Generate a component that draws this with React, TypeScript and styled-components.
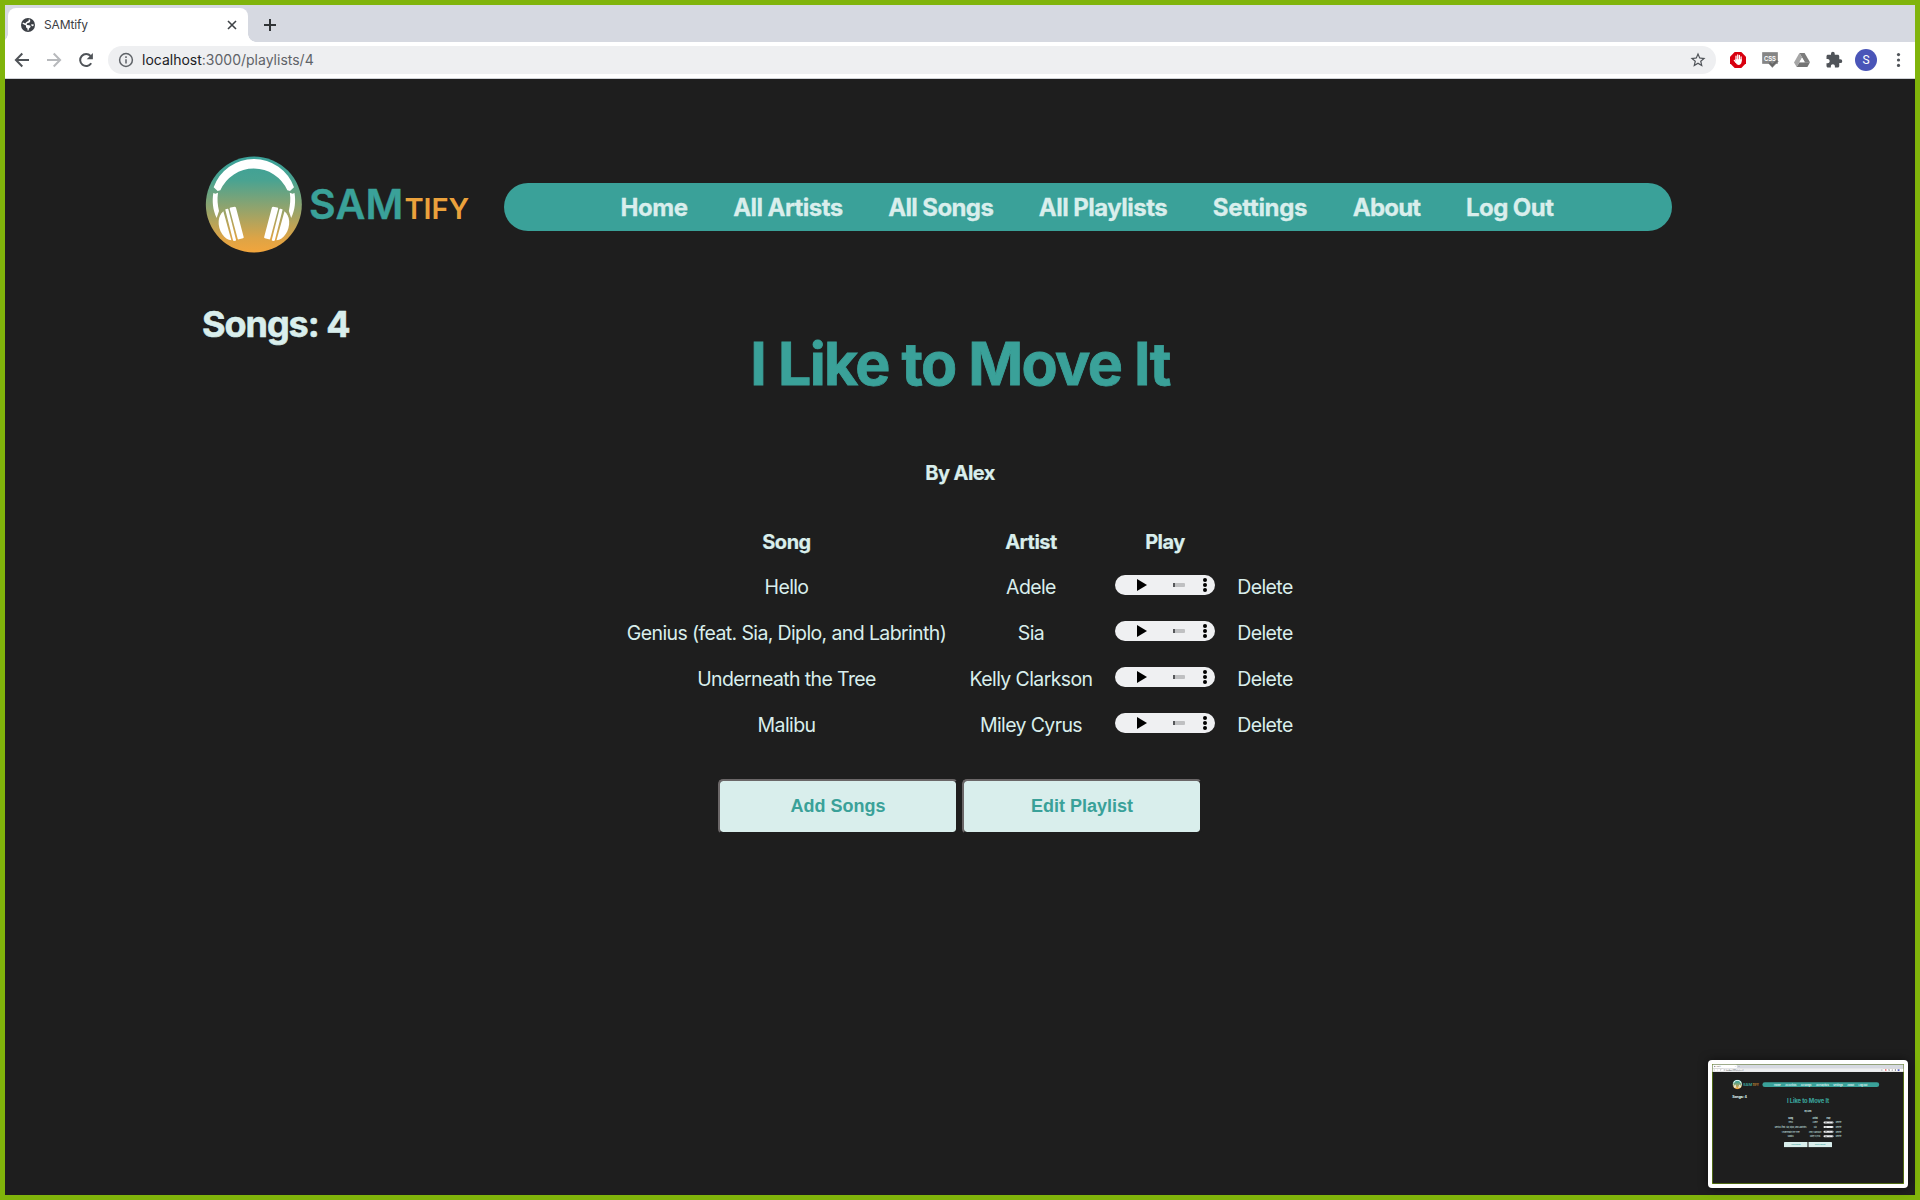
import React from 'react';
import styled, { createGlobalStyle } from 'styled-components';

const teal = '#3aa199';
const mint = '#d9eeec';
const dark = '#1e1e1e';
const sans = 'Inter, "Liberation Sans", sans-serif';

const GlobalStyle = createGlobalStyle`
  *, *::before, *::after { box-sizing: border-box; }
  html, body { margin: 0; padding: 0; background: ${dark}; overflow: hidden; }
`;

const Desktop = styled.div`
  position: relative;
  width: 1920px;
  height: 1200px;
  overflow: hidden;
`;

const Window = styled.div`
  width: 1920px;
  height: 1200px;
  border: 5px solid #80b40b;
  background: ${dark};
  font-family: ${sans};
  display: flex;
  flex-direction: column;
`;

/* Browser chrome */
const TabStrip = styled.div`
  height: 37px;
  flex: none;
  background: #d6d9e1;
  display: flex;
  align-items: flex-end;
  padding-left: 3px;
  overflow: hidden;
`;

const Tab = styled.div`
  position: relative;
  width: 240px;
  height: 34px;
  background: #fff;
  border-radius: 8px 8px 0 0;
  display: flex;
  align-items: center;
  padding: 0 11px 0 13px;

  &::before, &::after {
    content: '';
    position: absolute;
    bottom: 0;
    width: 8px;
    height: 8px;
  }
  &::before { left: -8px; background: radial-gradient(circle at 0 0, transparent 7.5px, #fff 8px); }
  &::after { right: -8px; background: radial-gradient(circle at 100% 0, transparent 7.5px, #fff 8px); }
`;

const TabTitle = styled.span`
  flex: 1;
  margin-left: 9px;
  font-size: 12px;
  line-height: 16px;
  letter-spacing: -0.15px;
  color: #3c4043;
`;

const NewTab = styled.div`
  width: 28px;
  height: 34px;
  margin-left: 8px;
  display: grid;
  place-items: center;
`;

const Toolbar = styled.div`
  height: 37px;
  flex: none;
  background: #fff;
  border-bottom: 1px solid #cfd1d6;
  display: flex;
  align-items: center;
  padding: 0 8px 0 8px;
`;

const NavIcons = styled.div`
  display: flex;
  gap: 14px;
  width: 95px;
`;

const Omnibox = styled.div`
  width: 1608px;
  height: 28px;
  border-radius: 14px;
  background: #eeeff1;
  display: flex;
  align-items: center;
  padding: 0 9px 0 9px;
`;

const Url = styled.span`
  flex: 1;
  margin-left: 7px;
  font-size: 14px;
  line-height: 20px;
  color: #5f6368;
  b { font-weight: 400; color: #202124; }
`;

const Extensions = styled.div`
  display: flex;
  align-items: center;
  margin-left: 13px;
  gap: 14px;
`;

const Avatar = styled.div`
  width: 22px;
  height: 22px;
  margin-left: -2px;
  border-radius: 50%;
  background: #4a55b8;
  color: #fff;
  font: 12px/22px Roboto, sans-serif;
  text-align: center;
`;

/* Page */
const Page = styled.main`
  flex: 1;
  padding-top: 75px;
  color: ${mint};
`;

const Header = styled.header`
  height: 100px;
  display: flex;
  padding-left: 198px;
`;

const Brand = styled.div`
  width: 301px;
  display: flex;
`;

const Wordmark = styled.div`
  margin: 30px 0 0 4px;
  height: 40px;
  display: flex;
  align-items: baseline;
  line-height: 40px;
  font-weight: 600;
`;

const Sam = styled.span`
  font-size: 41px;
  letter-spacing: 0.2px;
  color: ${teal};
  -webkit-text-stroke: 0.4px ${teal};
`;

const Tify = styled.span`
  margin-left: 1px;
  font-size: 29px;
  letter-spacing: -0.1px;
  color: #eba23c;
`;

const NavBar = styled.nav`
  width: 1168px;
  height: 48px;
  margin-top: 29px;
  padding: 1px 2px 0 0;
  border-radius: 24px;
  background: ${teal};
  display: flex;
  justify-content: center;
  align-items: center;
  gap: 45.6px;
`;

const NavLink = styled.a<{ $track: number }>`
  font-size: 24px;
  line-height: 47px;
  font-weight: 700;
  -webkit-text-stroke: 0.3px ${mint};
  letter-spacing: ${p => p.$track}px;
  white-space: nowrap;
  color: ${mint};
`;

const Count = styled.h2`
  margin: 48px 0 0 197px;
  font-size: 36px;
  font-weight: 700;
  -webkit-text-stroke: 0.6px ${mint};
  line-height: 44px;
  letter-spacing: -1.05px;
`;

const Title = styled.h1`
  margin: -18px 0 0;
  text-align: center;
  font-size: 59px;
  font-weight: 700;
  -webkit-text-stroke: 0.8px ${teal};
  line-height: 72px;
  letter-spacing: -1.65px;
  word-spacing: 0.5px;
  color: ${teal};
`;

const Author = styled.h3`
  margin: 61px 0 0;
  text-align: center;
  font-size: 20px;
  font-weight: 700;
  -webkit-text-stroke: 0.2px ${mint};
  line-height: 24px;
  letter-spacing: -0.6px;
`;

const SongList = styled.div`
  width: 667px;
  margin: 34px 0 0 621px;
  display: grid;
  grid-template-columns: 321px 124px 100px 56px;
  grid-template-rows: 45px repeat(4, 46px);
  column-gap: 22px;
  justify-items: center;
  align-items: center;
  font-size: 19.5px;
  line-height: 24px;
`;

const Heading = styled.div`
  font-size: 20px;
  font-weight: 700;
  -webkit-text-stroke: 0.2px ${mint};
  letter-spacing: -0.5px;
`;

const Cell = styled.div`
  letter-spacing: -0.62px;
  white-space: nowrap;
`;

const Player = styled.div`
  width: 100px;
  height: 20px;
  margin-bottom: 4px;
  border-radius: 10px;
  background: #eff0f2;
  svg { display: block; }
`;

const Actions = styled.div`
  display: flex;
  justify-content: center;
  gap: 4px;
  margin-top: 31px;
`;

const Button = styled.button`
  width: 240px;
  height: 55px;
  padding: 0 0 2px;
  border: 2px solid;
  border-color: #6b6768 ${dark} ${dark} #6b6768;
  border-radius: 5px;
  background: ${mint};
  background-clip: padding-box;
  font: 700 18px/22px "Liberation Sans", Arial, sans-serif;
  color: ${teal};
`;

/* Floating screenshot preview */
const Preview = styled.div`
  position: absolute;
  left: 1708px;
  top: 1060px;
  width: 200px;
  height: 128px;
  padding: 4px;
  border-radius: 4px;
  background: #fff;
  box-shadow: 0 0 10px rgba(0, 0, 0, 0.5);
`;

const PreviewClip = styled.div`
  width: 192px;
  height: 120px;
  overflow: hidden;
`;

const Shrink = styled.div`
  width: 1920px;
  height: 1200px;
  transform: scale(0.1);
  transform-origin: 0 0;
`;

const Globe = () => (
  <svg width="14" height="14" viewBox="0 0 14 14">
    <circle cx="7" cy="7" r="7" fill="#3c4046" />
    <path d="M1.500 5.800 5 7.600 5 9.300 6.600 10.700 6.500 12.500 7.500 12.400 8 10.500 9.600 9 9.400 7.700 8.200 7.200 6 7 5.600 6 6.700 5 8.300 4.700 9.400 3 8.800 1.600 7.600 1.500 7.600 2.900 6.200 3.600 5 4.500 4.300 5.600 2 4.600ZM9.900 6.400 12.600 6.200 12.500 8 11 8.300Z" fill="#fff" />
  </svg>
);

const Logo = ({ id }: { id: string }) => (
  <svg width="102" height="100" viewBox="39 42 306 300">
    <defs>
      <linearGradient id={id} x1="0" y1="0" x2="0" y2="1">
        <stop offset="0" stopColor="#3aa199" />
        <stop offset="0.25" stopColor="#4aa391" />
        <stop offset="0.85" stopColor="#dda446" />
        <stop offset="1" stopColor="#f2a53c" />
      </linearGradient>
    </defs>
    <circle cx="191.5" cy="193.5" r="144" fill={`url(#${id})`} />
    <path d="M71 142A128 128 0 0 1 312 142L300 153 292 151A110 110 0 0 0 91 151L83 153Z" fill="#fff" />
    {[0, 1].map(side => (
      <g key={side} fill="#fff" transform={side ? 'translate(383.5 0) scale(-1 1)' : undefined}>
        <path d="M70 159 76 161 84 158C81 179 83 193 87 213L80 234C68 210 66 183 70 159Z" />
        <path d="M100 214 124 301C103 299 84 272 86 243 87 231 92 221 100 214Z" />
        <path d="M106 210Q105 208 107 207.500L112 206.500Q114 206 115 208L138 299Q139 302 136 302.500L132 303Q130 303 129 301Z" />
        <path d="M119 206Q119 203 122 202.500L134 200Q137 200 138 203L161 291Q162 294 159 295L147 298Q144 299 143 296Z" />
      </g>
    ))}
  </svg>
);

const BackArrow = ({ color, flip }: { color: string; flip?: boolean }) => (
  <svg width="18" height="18" viewBox="0 0 18 18" fill="none" stroke={color} strokeWidth="2"
    transform={flip ? 'scale(-1 1)' : undefined}>
    <path d="M16 9H3.500M9.300 2.500 2.900 9 9.300 15.500" />
  </svg>
);

const Reload = () => (
  <svg width="18" height="18" viewBox="0 0 18 18">
    <path d="M14.200 12.300A6 6 0 1 1 13.600 5" fill="none" stroke="#4f5358" strokeWidth="2" />
    <path d="M15.900 2V8.200H9.700Z" fill="#4f5358" />
  </svg>
);

const Info = () => (
  <svg width="18" height="18" viewBox="0 0 18 18" fill="none" stroke="#5f6368" strokeWidth="1.500">
    <circle cx="9" cy="9" r="6.400" />
    <path d="M9 8.200V12.600M9 5.300V6.900" />
  </svg>
);

const Star = () => (
  <svg width="18" height="18" viewBox="0 0 24 24" fill="#4f5358">
    <path d="M22 9.240l-7.190-.620L12 2 9.190 8.630 2 9.240l5.460 4.730L5.820 21 12 17.270 18.180 21l-1.630-7.030L22 9.240zM12 15.400l-3.760 2.270 1-4.280-3.320-2.880 4.380-.380L12 6.100l1.710 4.040 4.380.380-3.320 2.880 1 4.280L12 15.400z" />
  </svg>
);

const Blocker = () => (
  <svg width="18" height="18" viewBox="0 0 18 18">
    <path d="M5.700 1H12.300L17 5.700V12.300L12.300 17H5.700L1 12.300V5.700Z" fill="#d8000f" />
    <g stroke="#fff" strokeWidth="1.200" strokeLinecap="round" fill="none">
      <path d="M7 9V5M8.700 8.500V3.900M10.400 8.500V4.400M12.100 9.500V5.800M5.300 9.300 7 11.300" />
    </g>
    <path d="M6.400 8.300H12.700V10.500Q12.300 13.900 9.500 13.900 7.500 13.700 6.400 11.200Z" fill="#fff" />
  </svg>
);

const CssBadge = () => (
  <svg width="18" height="18" viewBox="0 0 18 18">
    <path d="M1.500 1.500H16.500V12.500H1.500Z" fill="#858585" stroke="#989898" />
    <text x="9" y="9.700" textAnchor="middle" textLength="12" lengthAdjust="spacingAndGlyphs" fontFamily="Liberation Sans, sans-serif" fontWeight="700" fontSize="8" fill="#fff">CSS</text>
    <path d="M7 11.800 9.200 10.800 11.200 12.500 15.800 8.800 17.300 10.200 11.300 16.500Z" fill="#666" stroke="#909090" strokeWidth="0.600" />
  </svg>
);

const Drive = () => (
  <svg width="18" height="18" viewBox="0 0 18 18">
    <path d="M6.400 2H11.600L17 11.200H11.900Z" fill="#7c7c7c" />
    <path d="M6.400 2 9.100 6.600 3.700 16 1 11.400Z" fill="#a6a6a6" />
    <path d="M6.500 11.200H17L14.400 16H3.700Z" fill="#747474" />
    <path d="M9.100 6.800 11.600 11.200H6.500Z" fill="#fff" />
  </svg>
);

const Puzzle = () => (
  <svg width="18" height="18" viewBox="0 0 24 24" fill="#4f5358">
    <path d="M20.500 11H19V7c0-1.100-.900-2-2-2h-4V3.500a2.500 2.500 0 0 0-5 0V5H4c-1.100 0-1.990.900-1.990 2v3.800H3.500c1.490 0 2.700 1.210 2.700 2.700s-1.210 2.700-2.700 2.700H2V20c0 1.100.900 2 2 2h3.800v-1.500c0-1.490 1.210-2.700 2.700-2.700s2.700 1.210 2.700 2.700V22H17c1.100 0 2-.900 2-2v-4h1.500a2.500 2.500 0 0 0 0-5z" />
  </svg>
);

const Kebab = () => (
  <svg width="14" height="18" viewBox="0 0 14 18" fill="#4f5358">
    {[3.600, 9, 14.400].map(y => <circle key={y} cx="7.500" cy={y} r="1.600" />)}
  </svg>
);

const PlayerControls = () => (
  <svg width="100" height="20" viewBox="0 0 100 20">
    <path d="M22 4V16L32 10Z" />
    <rect x="58" y="8" width="12" height="4" rx="1" fill="#bfc0c2" />
    <rect x="58" y="8" width="2" height="4" fill="#55575a" />
    {[5, 10, 15].map(y => <circle key={y} cx="90" cy={y} r="2" />)}
  </svg>
);

const links: [string, number][] = [
  ['Home', -0.45], ['All Artists', -0.56], ['All Songs', -0.62], ['All Playlists', -0.52],
  ['Settings', -0.3], ['About', -0.8], ['Log Out', -0.55],
];

const songs = [
  ['Hello', 'Adele'],
  ['Genius (feat. Sia, Diplo, and Labrinth)', 'Sia'],
  ['Underneath the Tree', 'Kelly Clarkson'],
  ['Malibu', 'Miley Cyrus'],
];

const Browser = ({ id }: { id: string }) => (
  <Window>
    <TabStrip>
      <Tab>
        <Globe />
        <TabTitle>SAMtify</TabTitle>
        <svg width="10" height="10" viewBox="0 0 10 10" stroke="#3f4347" strokeWidth="1.600">
          <path d="M1 1 9 9M9 1 1 9" />
        </svg>
      </Tab>
      <NewTab>
        <svg width="12" height="12" viewBox="0 0 12 12" stroke="#303336" strokeWidth="2">
          <path d="M6 0V12M0 6H12" />
        </svg>
      </NewTab>
    </TabStrip>
    <Toolbar>
      <NavIcons>
        <BackArrow color="#4f5358" />
        <BackArrow color="#b7b9bc" flip />
        <Reload />
      </NavIcons>
      <Omnibox>
        <Info />
        <Url><b>localhost</b>:3000/playlists/4</Url>
        <Star />
      </Omnibox>
      <Extensions>
        <Blocker />
        <CssBadge />
        <Drive />
        <Puzzle />
        <Avatar>S</Avatar>
        <Kebab />
      </Extensions>
    </Toolbar>
    <Page>
      <Header>
        <Brand>
          <Logo id={id} />
          <Wordmark><Sam>SAM</Sam><Tify>TIFY</Tify></Wordmark>
        </Brand>
        <NavBar>
          {links.map(([label, track]) => <NavLink key={label} $track={track}>{label}</NavLink>)}
        </NavBar>
      </Header>
      <Count>Songs: 4</Count>
      <Title>I Like to Move It</Title>
      <Author>By Alex</Author>
      <SongList>
        <Heading>Song</Heading>
        <Heading>Artist</Heading>
        <Heading>Play</Heading>
        <span />
        {songs.map(([song, artist]) => (
          <React.Fragment key={song}>
            <Cell>{song}</Cell>
            <Cell>{artist}</Cell>
            <Player><PlayerControls /></Player>
            <Cell>Delete</Cell>
          </React.Fragment>
        ))}
      </SongList>
      <Actions>
        <Button>Add Songs</Button>
        <Button>Edit Playlist</Button>
      </Actions>
    </Page>
  </Window>
);

export default function App() {
  return (
    <Desktop>
      <GlobalStyle />
      <Browser id="logo-main" />
      <Preview>
        <PreviewClip>
          <Shrink><Browser id="logo-preview" /></Shrink>
        </PreviewClip>
      </Preview>
    </Desktop>
  );
}
